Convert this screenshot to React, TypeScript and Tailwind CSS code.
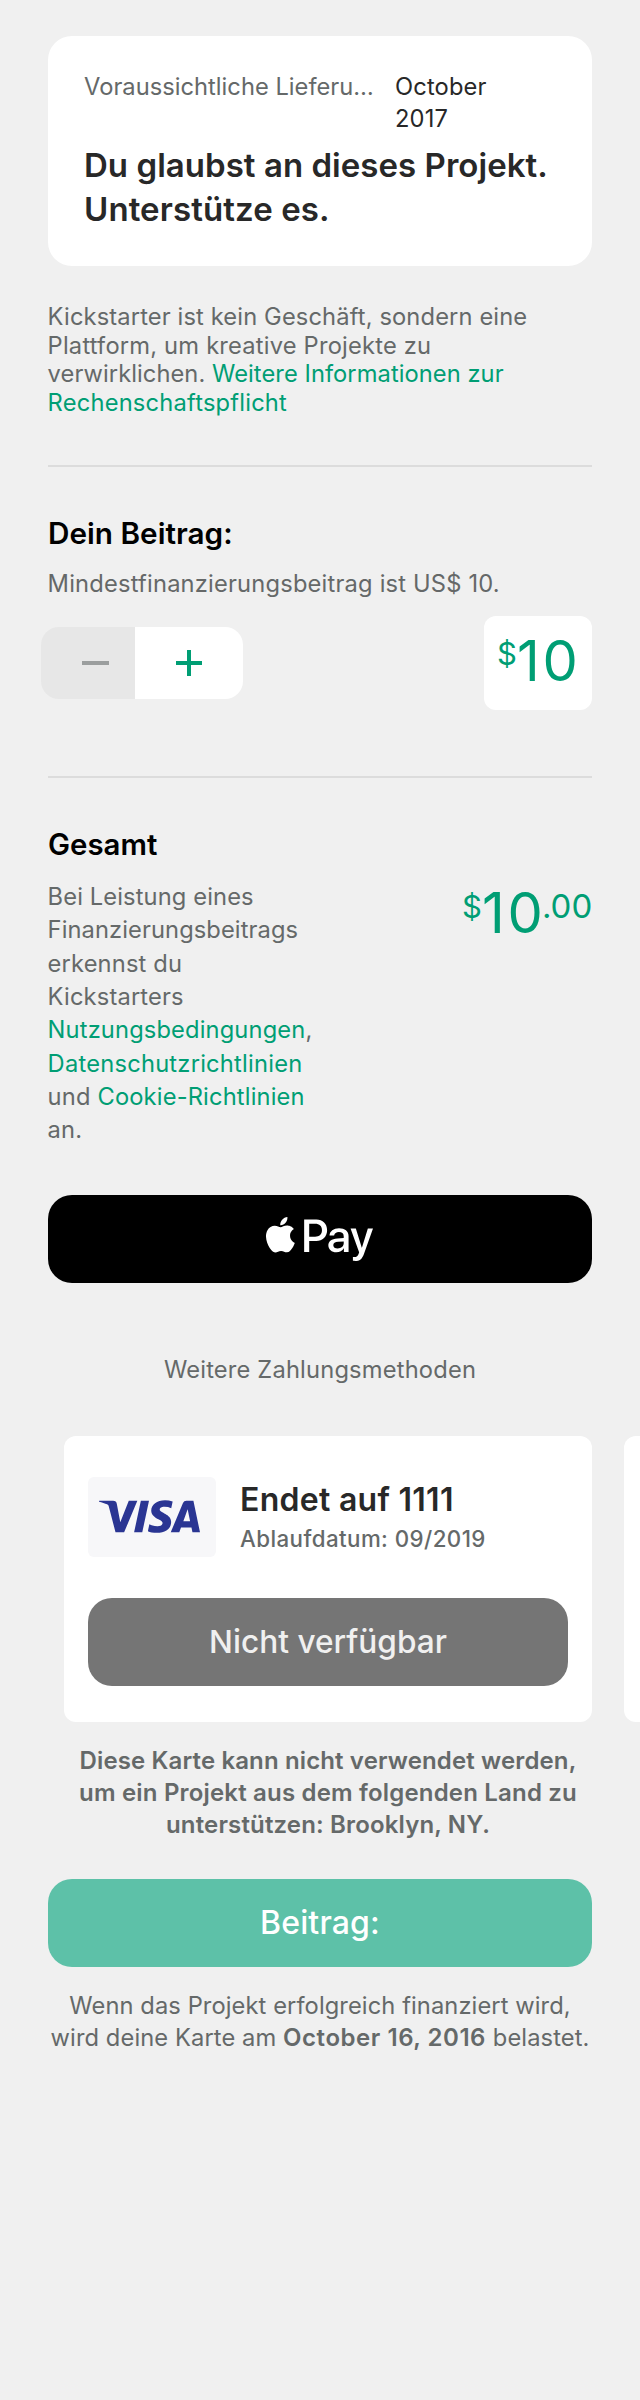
import type { ReactNode } from "react";
import { FaApplePay } from "react-icons/fa";
import { SiVisa } from "react-icons/si";

function Line({ className = "", children }: { className?: string; children: ReactNode }) {
  return <span className={`block whitespace-nowrap ${className}`}>{children}</span>;
}

function Link({ className = "", children }: { className?: string; children: ReactNode }) {
  return (
    <a href="#" className={`text-[#009e74] ${className}`}>
      {children}
    </a>
  );
}

function RewardSummary() {
  return (
    <section className="h-[230px] rounded-3xl bg-white px-9 pt-[34.5px] text-[#282828]">
      <div className="flex gap-[22px] text-[23.7px] leading-8">
        <div className="w-[289px] tracking-[0.02px] whitespace-nowrap text-[#656969]">
          Voraussichtliche Lieferu…
        </div>
        <div className="w-[120px] tracking-[0.15px]">October 2017</div>
      </div>
      <h1 className="mt-[8px] text-[33px] leading-[44px] font-semibold">
        <Line className="tracking-[0.04px]">Du glaubst an dieses Projekt.</Line>
        <Line className="tracking-[0.1px]">Unterstütze es.</Line>
      </h1>
    </section>
  );
}

function Divider() {
  return <hr className="h-0.5 border-0 bg-[#dcdcdc]" />;
}

function Stepper() {
  return (
    <div className="-ml-[7px] flex h-[72px] w-[202px] overflow-hidden rounded-[18px]">
      <button aria-label="Weniger" className="flex w-[94px] items-center bg-[#e7e7e7] pl-[41px]">
        <span className="h-1 w-[27px] bg-[#9b9e9e]" />
      </button>
      <button aria-label="Mehr" className="flex w-[108px] items-center bg-white pl-[41px]">
        <svg width="26" height="26" viewBox="0 0 26 26" className="text-[#009e74]">
          <path d="M0 13H26M13 0V26" stroke="currentColor" strokeWidth="4" />
        </svg>
      </button>
    </div>
  );
}

function PaymentCard() {
  return (
    <article className="h-[286px] w-[528px] shrink-0 rounded-xl bg-white px-6 pt-[41px]">
      <div className="flex h-20">
        <div className="flex h-20 w-32 shrink-0 items-center justify-center rounded-md bg-[#f7f7f9] pr-[6px] pb-[2px]">
          <SiVisa size={101} color="#2a3593" aria-label="Visa" />
        </div>
        <div className="pt-[2px] pl-[24px] whitespace-nowrap">
          <div className="text-[32px] leading-[42px] font-semibold tracking-[0.28px] text-[#282828]">
            Endet auf 1111
          </div>
          <div className="text-[22.3px] leading-9 font-medium tracking-[0.43px] text-[#656969]">
            Ablaufdatum: 09/2019
          </div>
        </div>
      </div>
      <button className="mt-[41px] h-[88px] w-full rounded-3xl bg-[#757575] text-[31.6px] font-medium tracking-[0.02px] text-[#f0f0f0]">
        Nicht verfügbar
      </button>
    </article>
  );
}

export default function App() {
  return (
    <main className="h-[2400px] w-[640px] overflow-hidden bg-[#f0f0f0] px-12 pt-9 font-['Inter',sans-serif] text-[23.7px] text-[#656969]">
      <RewardSummary />

      <p className="mt-[37px] mb-[47.2px] -ml-[0.4px] leading-[28.7px]">
        <Line className="tracking-[0.13px]">Kickstarter ist kein Geschäft, sondern eine</Line>
        <Line className="tracking-[0.2px]">Plattform, um kreative Projekte zu</Line>
        <Line className="tracking-[0.06px]">
          verwirklichen. <Link>Weitere Informationen zur</Link>
        </Line>
        <Line className="tracking-[0.2px]">
          <Link>Rechenschaftspflicht</Link>
        </Line>
      </p>

      <Divider />

      <section className="mt-12">
        <h2 className="text-[29.7px] leading-9 font-semibold tracking-[0.02px] text-black">Dein Beitrag:</h2>
        <p className="mt-[18.7px] -ml-[0.4px] leading-7 tracking-[0.19px] whitespace-nowrap text-[#656868]">
          Mindestfinanzierungsbeitrag ist US$ 10.
        </p>
        <div className="mt-[18.5px] mb-[66px] flex items-center justify-between">
          <Stepper />
          <div className="flex h-[94px] w-[108px] items-start rounded-xl bg-white pt-[9px] pl-[13px] text-[#009e74]">
            <span className="mt-[9px] w-[20px] text-[31px] leading-[40px]">$</span>
            <span className="text-[56px] leading-[72px] tracking-[2.8px]">10</span>
          </div>
        </div>
      </section>

      <Divider />

      <section className="mt-[48.7px]">
        <h2 className="text-[29.4px] leading-9 font-semibold tracking-[0.02px] text-black">Gesamt</h2>
        <div className="mt-[17.3px] flex justify-between">
          <p className="-ml-[0.4px] leading-[33.3px]">
            <Line className="tracking-[0.12px]">Bei Leistung eines</Line>
            <Line className="tracking-[0.09px]">Finanzierungsbeitrags</Line>
            <Line className="tracking-[0.15px]">erkennst du</Line>
            <Line className="tracking-[0.15px]">Kickstarters</Line>
            <Line className="tracking-[0.14px]">
              <Link>Nutzungsbedingungen</Link>,
            </Line>
            <Line className="tracking-[0.22px]">
              <Link>Datenschutzrichtlinien</Link>
            </Line>
            <Line className="tracking-[0.16px]">
              und <Link>Cookie-Richtlinien</Link>
            </Line>
            <Line className="tracking-[0.15px]">an.</Line>
          </p>
          <div className="flex w-[130px] items-start text-[#009e74]">
            <span className="mt-[7px] w-[20px] text-[31px] leading-[40px]">$</span>
            <span className="-mt-[3px] w-[60px] text-[56px] leading-[72px] tracking-[2.8px]">10</span>
            <span className="mt-[6px] text-[33px] leading-[40px]">.00</span>
          </div>
        </div>
      </section>

      <button className="mt-[48.6px] flex h-[88px] w-full items-center justify-center rounded-3xl bg-black pr-[2px] text-white">
        <FaApplePay className="h-[86px] w-[107px]" aria-label="Apple Pay" />
      </button>

      <h3 className="mt-[72.5px] text-center leading-7 tracking-[0.18px]">Weitere Zahlungsmethoden</h3>

      <div className="mt-[52.5px] -mr-12 ml-4 flex gap-8 overflow-hidden">
        <PaymentCard />
        <article className="h-[286px] w-[528px] shrink-0 rounded-xl bg-white" />
      </div>

      <p className="mt-[22.5px] ml-4 text-center text-[24px] leading-8 font-semibold">
        <Line className="tracking-[0.13px]">Diese Karte kann nicht verwendet werden,</Line>
        <Line className="tracking-[0.18px]">um ein Projekt aus dem folgenden Land zu</Line>
        <Line className="tracking-[0.16px]">unterstützen: Brooklyn, NY.</Line>
      </p>

      <button className="mt-[38.5px] block h-[88px] w-full rounded-3xl bg-[#5dc1a8] text-[32px] font-medium tracking-[0.15px] text-white">
        Beitrag:
      </button>

      <p className="mt-[22.5px] text-center leading-8">
        <Line className="tracking-[0.09px]">Wenn das Projekt erfolgreich finanziert wird,</Line>
        <Line className="tracking-[0.1px]">
          wird deine Karte am <b className="text-[24px] font-semibold tracking-[0.54px]">October 16, 2016</b> belastet.
        </Line>
      </p>
    </main>
  );
}
